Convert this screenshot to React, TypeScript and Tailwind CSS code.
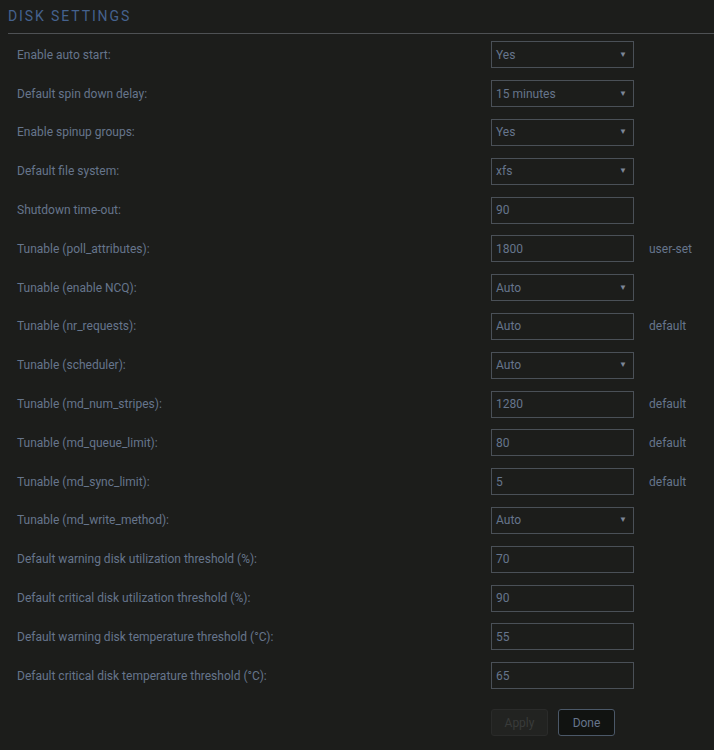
import React from "react";

type Row = {
  label: string;
  value: string;
  select?: boolean;
  note?: string;
};

const rows: Row[] = [
  { label: "Enable auto start:", value: "Yes", select: true },
  { label: "Default spin down delay:", value: "15 minutes", select: true },
  { label: "Enable spinup groups:", value: "Yes", select: true },
  { label: "Default file system:", value: "xfs", select: true },
  { label: "Shutdown time-out:", value: "90" },
  { label: "Tunable (poll_attributes):", value: "1800", note: "user-set" },
  { label: "Tunable (enable NCQ):", value: "Auto", select: true },
  { label: "Tunable (nr_requests):", value: "Auto", note: "default" },
  { label: "Tunable (scheduler):", value: "Auto", select: true },
  { label: "Tunable (md_num_stripes):", value: "1280", note: "default" },
  { label: "Tunable (md_queue_limit):", value: "80", note: "default" },
  { label: "Tunable (md_sync_limit):", value: "5", note: "default" },
  { label: "Tunable (md_write_method):", value: "Auto", select: true },
  { label: "Default warning disk utilization threshold (%):", value: "70" },
  { label: "Default critical disk utilization threshold (%):", value: "90" },
  { label: "Default warning disk temperature threshold (°C):", value: "55" },
  { label: "Default critical disk temperature threshold (°C):", value: "65" },
];

// ---------------------------------------------------------------------------
// Single setting row
// ---------------------------------------------------------------------------

function SettingRow({ row }: { row: Row }) {
  return (
    <div className="flex h-[38.8px] items-center">
      <div className="w-[491px] pl-[17px] text-[#66758c]">{row.label}</div>
      <div className="flex h-[27px] w-[143px] items-center border border-[#4a5057] pl-[4px] pr-[6px] text-[#66758c]">
        <span className="flex-1">{row.value}</span>
        {row.select && <span className="text-[8px] text-[#7d8797]">▼</span>}
      </div>
      {row.note && <div className="pl-[15px] text-[#66758c]">{row.note}</div>}
    </div>
  );
}

export default function App() {
  return (
    <div
      className="h-[750px] w-[714px] overflow-hidden bg-[#1c1d1b] text-[12px]"
      style={{ fontFamily: "Roboto, 'Liberation Sans', sans-serif" }}
    >
      {/* Title */}
      <div className="ml-[8px] border-b border-[#4e5154] pt-[7px] pb-[7px]">
        <h1 className="text-[14px] leading-[19px] tracking-[1.9px] text-[#45628e]">DISK SETTINGS</h1>
      </div>

      {/* Settings */}
      <div className="pt-[1.5px]">
        {rows.map((row) => (
          <SettingRow key={row.label} row={row} />
        ))}
      </div>

      {/* Actions */}
      <div className="flex gap-[10px] pl-[491px] pt-[14px]">
        <button
          type="button"
          disabled
          className="h-[27px] w-[57px] rounded-[3px] border border-[#2a2b2a] bg-[#222321] text-[#393b3a]"
        >
          Apply
        </button>
        <button
          type="button"
          className="h-[27px] w-[57px] rounded-[3px] border border-[#4b5868] bg-[#111311] text-[#66758c]"
        >
          Done
        </button>
      </div>
    </div>
  );
}
